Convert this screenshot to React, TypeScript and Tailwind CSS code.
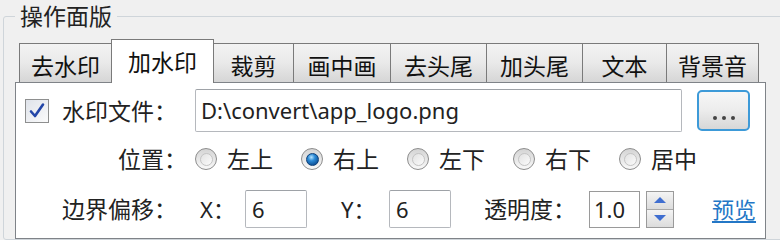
import React from "react";

const FONT = "font-['Noto_Sans','Noto_Sans_CJK_SC',sans-serif]";

function Radio({ checked }: { checked?: boolean }) {
  return (
    <span className="w-[22px] h-[22px] rounded-full border border-[#8d8d8d] bg-gradient-to-b from-[#d4d4d4] to-[#f9f9f9] flex items-center justify-center shrink-0">
      {checked ? (
        <span className="w-[13px] h-[13px] rounded-full bg-[radial-gradient(circle_at_40%_30%,#b5e3ff_0%,#2b8ad6_35%,#0d4f95_80%)] border border-[#0d3f78]" />
      ) : (
        <span className="w-[13px] h-[13px] rounded-full bg-gradient-to-br from-[#e2e2e2] to-[#fbfbfb] border border-[#c4c4c4]" />
      )}
    </span>
  );
}

function Tab({ label, w, selected }: { label: string; w: string; selected?: boolean }) {
  if (selected) {
    return (
      <div
        className={`${w} h-[44px] -ml-px -mb-px relative z-10 border-l border-t border-r border-[#7a7a7a] bg-white flex items-center justify-center text-[23px] leading-[28px] text-[#111]`}
      >
        {label}
      </div>
    );
  }
  return (
    <div
      className={`${w} h-[39px] -ml-px first:ml-0 border-l border-t border-r border-[#7a7a7a] bg-gradient-to-b from-[#f3f3f3] via-[#e9e9e9] to-[#d6d6d6] flex items-center justify-center pt-[6px] text-[23px] leading-[28px] text-[#111]`}
    >
      {label}
    </div>
  );
}

export default function App() {
  return (
    <div className={`w-[780px] h-[240px] overflow-hidden bg-[#f0f0f0] ${FONT} text-[#1c1c1c]`}>
      <fieldset className="ml-[3px] mt-[1px] w-[800px] border border-[#cfd5da] rounded-[3px] pl-[11px] pt-[8px]">
        <legend className="px-[5px] text-[23px] leading-[30px] text-[#222]">操作面版</legend>
        <div className="flex items-end ml-[4px] h-[43px]">
          <Tab label="去水印" w="w-[93px]" />
          <Tab label="加水印" w="w-[103px]" selected />
          <Tab label="裁剪" w="w-[81px]" />
          <Tab label="画中画" w="w-[98px]" />
          <Tab label="去头尾" w="w-[97px]" />
          <Tab label="加头尾" w="w-[97px]" />
          <Tab label="文本" w="w-[85px]" />
          <Tab label="背景音" w="w-[93px]" />
        </div>
        <div className="relative w-[751px] h-[157px] border border-[#7f8388] bg-white pt-[6px] pl-[9px] flex flex-col">
          {/* Row 1 */}
          <div className="flex items-center h-[43px]">
            <span className="w-[24px] h-[24px] border border-[#8e8f8f] bg-gradient-to-br from-[#dfe3ea] to-[#fbfbfb] flex items-center justify-center shrink-0">
              <svg width="18" height="18" viewBox="0 0 18 18">
                <path d="M3 9.5 L7 14 L15 2.5" fill="none" stroke="#2346a8" strokeWidth="2.6" strokeLinecap="round" strokeLinejoin="round" />
              </svg>
            </span>
            <span className="ml-[13px] w-[133px] text-[23px] leading-[28px] text-[#222]">水印文件：</span>
            <div className="w-[487px] h-[43px] border border-[#b5b8bd] border-t-[#9ea2a7] rounded-[2px] bg-white flex items-center pl-[5px] text-[22px] text-[#222]">
              D:\convert\app_logo.png
            </div>
            <button className="ml-[15px] w-[53px] h-[41px] rounded-[5px] border-2 border-[#3d9ad8] bg-gradient-to-b from-[#f7f7f7] via-[#ececec] to-[#d7d7d7] flex items-end justify-center pb-[9px]">
              <span className="flex gap-[5px]">
                <span className="w-[4px] h-[4px] rounded-full bg-[#444]" />
                <span className="w-[4px] h-[4px] rounded-full bg-[#444]" />
                <span className="w-[4px] h-[4px] rounded-full bg-[#444]" />
              </span>
            </button>
          </div>
          {/* Row 2 */}
          <div className="flex items-center h-[30px] mt-[12px]">
            <span className="w-[170px] text-right pr-[8px] text-[23px] leading-[28px] text-[#222]">位置：</span>
            {[
              ["左上", false],
              ["右上", true],
              ["左下", false],
              ["右下", false],
              ["居中", false],
            ].map(([t, c]) => (
              <div key={t as string} className="w-[106px] flex items-center gap-[10px]">
                <Radio checked={c as boolean} />
                <span className="text-[23px] leading-[28px] text-[#222]">{t as string}</span>
              </div>
            ))}
          </div>
          {/* Row 3 */}
          <div className="flex items-center h-[38px] mt-[16px]">
            <span className="ml-[37px] w-[138px] text-[23px] leading-[28px] text-[#222]">边界偏移：</span>
            <span className="w-[45px] text-[22px] leading-[28px] text-[#222]">X：</span>
            <div className="w-[62px] h-[38px] border border-[#b5b8bd] border-t-[#9ea2a7] rounded-[2px] flex items-center pl-[6px] text-[22px] text-[#222]">6</div>
            <span className="ml-[34px] w-[48px] text-[22px] leading-[28px] text-[#222]">Y：</span>
            <div className="w-[62px] h-[38px] border border-[#b5b8bd] border-t-[#9ea2a7] rounded-[2px] flex items-center pl-[6px] text-[22px] text-[#222]">6</div>
            <span className="ml-[33px] w-[105px] text-[23px] leading-[28px] text-[#222]">透明度：</span>
            <div className="w-[51px] h-[37px] border border-[#9a9a9a] flex items-center pl-[4px] text-[22px] text-[#222]">1.0</div>
            <div className="ml-[6px] w-[28px] h-[37px] border border-[#9a9a9a] flex flex-col">
              <div className="flex-1 bg-gradient-to-b from-[#f4f4f4] to-[#dcdcdc] border-b border-[#a8a8a8] flex items-center justify-center">
                <svg width="14" height="8" viewBox="0 0 14 8">
                  <path d="M1 7 L7 1 L13 7 Z" fill="#3f6ed0" />
                </svg>
              </div>
              <div className="flex-1 bg-gradient-to-b from-[#f4f4f4] to-[#dcdcdc] flex items-center justify-center">
                <svg width="14" height="8" viewBox="0 0 14 8">
                  <path d="M1 1 L7 7 L13 1 Z" fill="#3f6ed0" />
                </svg>
              </div>
            </div>
            <span className="ml-[38px] text-[22px] leading-[28px] text-[#2377c6] underline underline-offset-[3px]">预览</span>
          </div>
        </div>
      </fieldset>
    </div>
  );
}
